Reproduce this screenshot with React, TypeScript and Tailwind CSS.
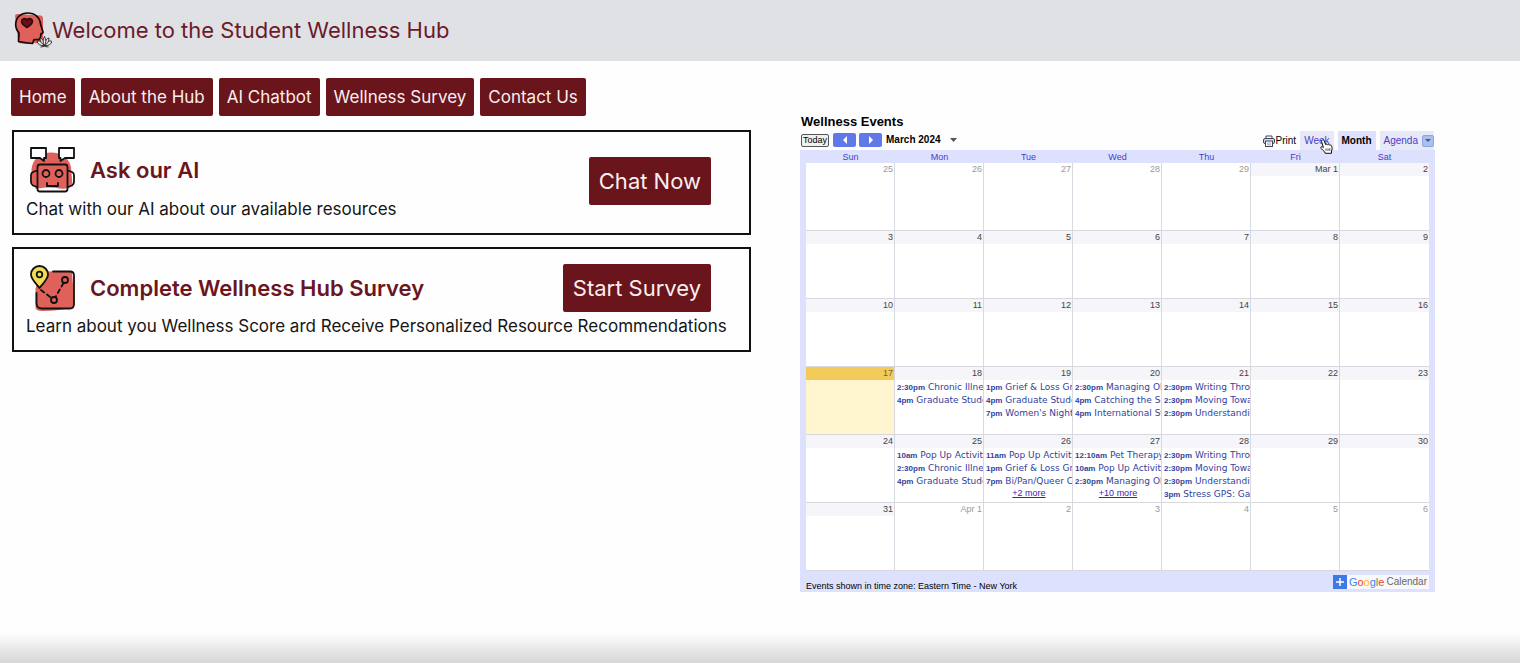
import React from "react";

type Event = { time: string; title: string };
type Day = { label: string; muted?: boolean; today?: boolean; events?: Event[]; more?: string };

const e = (time: string, title: string): Event => ({ time, title });

const WEEKDAYS = ["Sun", "Mon", "Tue", "Wed", "Thu", "Fri", "Sat"];

const days = (labels: string[]): Day[] => labels.map((label) => ({ label }));

const WEEKS: Day[][] = [
  [
    { label: "25", muted: true },
    { label: "26", muted: true },
    { label: "27", muted: true },
    { label: "28", muted: true },
    { label: "29", muted: true },
    { label: "Mar 1" },
    { label: "2" },
  ],
  days(["3", "4", "5", "6", "7", "8", "9"]),
  days(["10", "11", "12", "13", "14", "15", "16"]),
  [
    { label: "17", today: true },
    { label: "18", events: [e("2:30pm", "Chronic Illne"), e("4pm", "Graduate Stude")] },
    { label: "19", events: [e("1pm", "Grief & Loss Gr"), e("4pm", "Graduate Stude"), e("7pm", "Women's Night")] },
    { label: "20", events: [e("2:30pm", "Managing Ob"), e("4pm", "Catching the Sp"), e("4pm", "International St")] },
    { label: "21", events: [e("2:30pm", "Writing Throu"), e("2:30pm", "Moving Towa"), e("2:30pm", "Understandin")] },
    { label: "22" },
    { label: "23" },
  ],
  [
    { label: "24" },
    { label: "25", events: [e("10am", "Pop Up Activiti"), e("2:30pm", "Chronic Illne"), e("4pm", "Graduate Stude")] },
    { label: "26", events: [e("11am", "Pop Up Activiti"), e("1pm", "Grief & Loss Gr"), e("7pm", "Bi/Pan/Queer C")], more: "+2 more" },
    { label: "27", events: [e("12:10am", "Pet Therapy"), e("10am", "Pop Up Activiti"), e("2:30pm", "Managing Ob")], more: "+10 more" },
    { label: "28", events: [e("2:30pm", "Writing Throu"), e("2:30pm", "Moving Towa"), e("2:30pm", "Understandin"), e("3pm", "Stress GPS: Ga")] },
    { label: "29" },
    { label: "30" },
  ],
  [
    { label: "31" },
    { label: "Apr 1", muted: true },
    { label: "2", muted: true },
    { label: "3", muted: true },
    { label: "4", muted: true },
    { label: "5", muted: true },
    { label: "6", muted: true },
  ],
];

function HeadIcon() {
  return (
    <svg viewBox="0 0 38 36" className="h-9 w-[38px] shrink-0" fill="none" aria-hidden="true">
      <path d="M1 4Q1 2 3 2L27 3.500Q29 4 29 6V28Q29 31 26 31L7 31.500Q4 31 4 28Z" fill="#e0605a" />
      <path
        d="M4.500 29.500L5 21C2.500 18 1.500 15 1.700 12C2 5 7 1 13.500 1C21 1 26 5.500 26.500 12L29 20C29.200 21 28.500 21.500 27 21.500L26.500 25C26.300 27.500 25 28 20 27.500L18.500 31.500C13 31 9 30.500 4.500 29.500Z"
        stroke="#17090b"
        strokeWidth="1.700"
        strokeLinejoin="round"
      />
      <path d="M13 15.500C9.500 13 7.500 12 7.500 9.500C7.500 6.500 11.500 5.500 13 8C14.500 5.500 18.500 6.500 18.500 9.500C18.500 12 16.500 13 13 15.500Z" fill="#6b0f18" stroke="#2b090d" strokeWidth="1.500" />
      <g stroke="#222" strokeWidth="0.900" fill="#eceded" strokeLinejoin="round">
        <path d="M23 29.500C25.500 28 28.500 29.500 30.500 33.500C26.500 34 24 32.500 23 29.500Z" />
        <path d="M38 29.500C35.500 28 32.500 29.500 30.500 33.500C34.500 34 37 32.500 38 29.500Z" />
        <path d="M26 26C28.500 26.500 30 29 30.500 33.500C27.500 32 26 29 26 26Z" />
        <path d="M35 26C32.500 26.500 31 29 30.500 33.500C33.500 32 35 29 35 26Z" />
        <path d="M30.500 24.500C32.300 28 32.300 30.500 30.500 33.500C28.700 30.500 28.700 28 30.500 24.500Z" />
      </g>
      <path d="M26.500 35Q30.500 33.800 34.500 35" stroke="#222" strokeWidth="0.900" />
    </svg>
  );
}

function RobotIcon() {
  return (
    <svg viewBox="0 0 46 47" className="h-[47px] w-[46px] shrink-0" fill="none" aria-hidden="true">
      <path d="M1.500 22C3 11 11 5.500 21 5.500C32 5.500 39 11 41 20L42.500 38Q38 43 30 41.500Q18 39.500 6 42L2 36Z" fill="#e0605a" />
      <g stroke="#111" strokeWidth="1.800" strokeLinejoin="round" strokeLinecap="round">
        <path d="M1 1H16V11H14V14L10 11H1Z" fill="#fff" />
        <path d="M44 1H29V11H30.500V14L35 11H44Z" fill="#fff" />
        <rect x="7.500" y="17.500" width="30" height="27" rx="2.500" />
        <path d="M7 23.500L3 25Q1 26 1 28V35Q1 37 3 38.500L7 40" />
        <path d="M38 23.500L42 25Q44 26 44 28V35Q44 37 42 38.500L38 40" />
        <circle cx="16" cy="26.500" r="3.500" />
        <circle cx="29" cy="26.500" r="3.500" />
        <path d="M17 36V39H28V36" />
      </g>
    </svg>
  );
}

function MapIcon() {
  return (
    <svg viewBox="0 0 46 47" className="h-[47px] w-[46px] shrink-0" fill="none" aria-hidden="true">
      <path d="M10 7.500Q25 5.500 42 7Q44 25 43.500 42Q30 46 12 46Q6 46 5.500 43V24Z" fill="#e0605a" />
      <g stroke="#111" strokeWidth="1.800" strokeLinecap="round" strokeLinejoin="round">
        <path d="M23 6.500H40Q44 6.500 44 10.500V39Q44 43.500 40 43.500H12Q6.500 43.500 6.500 38V28" />
        <path d="M9.500 23C6 18.500 1 14 1 9.500A8.500 8.500 0 0 1 18 9.500C18 14 13 18.500 9.500 23Z" fill="#f3dc55" />
        <circle cx="9.500" cy="9.500" r="2.800" />
        <circle cx="35" cy="15" r="3" />
        <circle cx="24" cy="35" r="3" />
        <path d="M11 25L21.500 33" strokeDasharray="4 3.500" />
        <path d="M33.500 18L25.500 32" strokeDasharray="4 3.500" />
      </g>
    </svg>
  );
}

function PrinterIcon() {
  return (
    <svg viewBox="0 0 12 12" className="h-3 w-3" fill="none" aria-hidden="true">
      <path d="M3 4V1H9V4" fill="#fff" stroke="#3e465c" />
      <rect x="0.500" y="3.500" width="11" height="5" rx="1.500" fill="#d3dcf2" stroke="#3e465c" />
      <rect x="2.500" y="6" width="7" height="5.500" fill="#fff" stroke="#3e465c" />
      <path d="M4 8H8M4 9.800H8" stroke="#8b94ab" strokeWidth="0.800" />
    </svg>
  );
}

function HandCursor() {
  return (
    <svg viewBox="0 0 13 15" className="pointer-events-none absolute top-2 left-5 z-10 h-[15px] w-[13px]" aria-hidden="true">
      <path
        d="M2.200 1C3.200 0.500 4 1 4.300 2L5.500 5.500C6.300 4.800 7.200 5.200 7.500 5.800C8.300 5.100 9.200 5.400 9.600 6.200C10.700 5.600 11.500 6.200 11.700 7.300C12.200 9 12.300 10.500 11.500 12L11.500 14.300H5.200L4.800 13C3.500 12 2 10.500 1 9.300C0.300 8.300 1.300 7.200 2.500 7.900L3.400 8.600L1.600 2.600C1.400 1.900 1.600 1.300 2.200 1Z"
        fill="#fff"
        stroke="#111"
        strokeWidth="1"
        strokeLinejoin="round"
      />
      <path d="M6 9.500V12M8 9.300V12M9.800 9.200V12" stroke="#111" strokeWidth="0.700" />
    </svg>
  );
}

function NavLink({ children }: { children: React.ReactNode }) {
  return (
    <a href="#" className="rounded-xs bg-[#69151b] px-2 py-[5px] text-[17px] leading-7 text-[#fbeeee]">
      {children}
    </a>
  );
}

function Card({ icon, title, text, action, wide }: { icon: React.ReactNode; title: string; text: string; action: string; wide?: boolean }) {
  return (
    <section className="grid grid-cols-[1fr_auto] grid-rows-[48px_28px] border-2 border-[#111] px-3 pt-[15px] pb-[10px]">
      <div className={"flex gap-[14px] pl-1 " + (wide ? "items-center" : "items-center pb-[2px]")}>
        {icon}
        <h2 className="text-[22px] leading-7 font-semibold text-[#6b1520]">{title}</h2>
      </div>
      <button
        className={
          "col-start-2 row-start-1 mr-[26px] h-12 rounded-xs bg-[#69151b] px-[10px] text-[22px] text-[#fbeeee] " +
          (wide ? "self-center" : "row-span-2 mb-2 self-center")
        }
      >
        {action}
      </button>
      <p className={"row-start-2 text-[17px] leading-7 whitespace-nowrap text-[#151515] " + (wide ? "col-span-2" : "")}>{text}</p>
    </section>
  );
}

function DayCell({ day }: { day: Day }) {
  const head = day.today ? "bg-[#f3cb5a] text-[#7a6426]" : day.muted ? "text-[#999]" : "bg-[#f5f5fa] text-[#444]";
  return (
    <td
      className={
        "h-[68px] overflow-hidden border-r border-b border-[#d8d8e0] p-0 align-top last:border-r-0 " +
        (day.today ? "bg-[#fff6d0]" : "bg-white")
      }
    >
      <div className={"h-[13px] pr-px text-right text-[9px] leading-[13px] " + head}>{day.label}</div>
      {day.events && (
        <ul className="h-[54px] overflow-hidden pt-px pl-[2px]">
          {day.events.map((ev, i) => (
            <li key={i} className="overflow-hidden font-['DejaVu_Sans'] text-[9px] leading-[13px] whitespace-nowrap text-[#33439c]">
              <b className="font-['Liberation_Sans'] text-[8px]">{ev.time}</b> {ev.title}
            </li>
          ))}
          {day.more && (
            <li className="text-center text-[9px] leading-[11px]">
              <a href="#" className="text-[#3a22b8] underline">{day.more}</a>
            </li>
          )}
        </ul>
      )}
    </td>
  );
}

function Calendar() {
  return (
    <section className="font-['Liberation_Sans',sans-serif] text-black">
      <h2 className="pl-px text-[13px] leading-4 font-bold">Wellness Events</h2>
      <div className="flex h-5 items-end justify-between pl-px">
        <div className="flex items-center pb-[3px]">
          <button className="h-[13px] rounded-xs border border-[#555] bg-[#f0f0f0] px-px text-[9px] leading-[11px]">Today</button>
          <button aria-label="Previous month" className="ml-1 flex h-[14px] w-[23px] items-center justify-center rounded-xs bg-[#5f7ae8]">
            <svg viewBox="0 0 4 8" className="h-2 w-1" aria-hidden="true"><path d="M4 0V8L0 4Z" fill="#fff" /></svg>
          </button>
          <button aria-label="Next month" className="ml-[3px] flex h-[14px] w-[23px] items-center justify-center rounded-xs bg-[#5f7ae8]">
            <svg viewBox="0 0 4 8" className="h-2 w-1" aria-hidden="true"><path d="M0 0V8L4 4Z" fill="#fff" /></svg>
          </button>
          <button className="ml-1 flex items-center gap-[9px] text-[10px] leading-[14px] font-bold">
            March 2024
            <svg viewBox="0 0 7 4" className="h-1 w-[7px]" aria-hidden="true"><path d="M0 0H7L3.500 4Z" fill="#555" /></svg>
          </button>
        </div>
        <div className="flex h-[19px] items-stretch gap-1 pr-px text-[10px]">
          <button className="flex items-center gap-px"><PrinterIcon />Print</button>
          <div className="relative flex">
            <button className="bg-[#e8e9f8] px-1 text-[#4a3cc8]">Week</button>
            <HandCursor />
          </div>
          <button className="bg-[#dde1fd] px-1 font-bold">Month</button>
          <div className="flex items-center bg-[#e8e9f8]">
            <button className="px-1 text-[#4a3cc8]">Agenda</button>
            <button aria-label="More views" className="flex h-3 w-3 items-center justify-center rounded-xs border border-[#8da5dc] bg-[#a9c0f0]">
              <svg viewBox="0 0 6 3" className="h-[3px] w-[6px]" aria-hidden="true"><path d="M0 0H6L3 3Z" fill="#445a90" /></svg>
            </button>
          </div>
        </div>
      </div>
      <div className="bg-[#dde1fd] px-[6px] pt-[2px]">
        <table className="w-full table-fixed border-separate border-spacing-0">
          <thead>
            <tr>
              {WEEKDAYS.map((d) => (
                <th key={d} className="h-[11px] p-0 text-[9px] leading-[11px] font-normal text-[#4a3cc8]">{d}</th>
              ))}
            </tr>
          </thead>
          <tbody>
            {WEEKS.map((week, i) => (
              <tr key={i}>
                {week.map((day) => <DayCell key={day.label} day={day} />)}
              </tr>
            ))}
          </tbody>
        </table>
        <div className="flex h-[21px] items-center justify-between">
          <span className="pt-2 text-[9px] leading-3">Events shown in time zone: Eastern Time - New York</span>
          <a href="#" className="flex h-[14px] items-center bg-[#f8f8fd] pr-[2px] text-[11px] leading-[14px]">
            <svg viewBox="0 0 14 14" className="mr-[2px] h-[14px] w-[14px]" aria-hidden="true">
              <path d="M0 0H14V14H0Z" fill="#3f79e6" />
              <path d="M7 3V11M3 7H11" stroke="#fff" strokeWidth="1.500" />
            </svg>
            <span className="text-[#4285f4]">G</span>
            <span className="text-[#ea4335]">o</span>
            <span className="text-[#fbbc05]">o</span>
            <span className="text-[#4285f4]">g</span>
            <span className="text-[#34a853]">l</span>
            <span className="text-[#ea4335]">e</span>
            <span className="ml-[2px] text-[10px] text-[#666]">Calendar</span>
          </a>
        </div>
      </div>
    </section>
  );
}

export default function App() {
  return (
    <div className="flex min-h-screen flex-col bg-[#fefefe] font-['Inter',sans-serif]">
      <header className="flex h-[61px] items-center bg-[#e0e1e4] pb-px pl-[14px]">
        <HeadIcon />
        <h1 className="text-[22px] leading-8 text-[#6b1a2c]">Welcome to the Student Wellness Hub</h1>
      </header>
      <div className="grid flex-1 grid-cols-2">
        <main className="pt-[17px] pr-[9px] pl-[11px]">
          <nav className="flex gap-[6px]">
            <NavLink>Home</NavLink>
            <NavLink>About the Hub</NavLink>
            <NavLink>AI Chatbot</NavLink>
            <NavLink>Wellness Survey</NavLink>
            <NavLink>Contact Us</NavLink>
          </nav>
          <div className="flex flex-col gap-3 pt-[14px] pl-px">
            <Card icon={<RobotIcon />} title="Ask our AI" text="Chat with our AI about our available resources" action="Chat Now" />
            <Card
              wide
              icon={<MapIcon />}
              title="Complete Wellness Hub Survey"
              text="Learn about you Wellness Score ard Receive Personalized Resource Recommendations"
              action="Start Survey"
            />
          </div>
        </main>
        <aside className="pt-[53px] pr-[85px] pl-10">
          <Calendar />
        </aside>
      </div>
      <footer className="h-[30px] bg-linear-to-b from-[#fefefe] to-[#d6d6d6]" />
    </div>
  );
}
